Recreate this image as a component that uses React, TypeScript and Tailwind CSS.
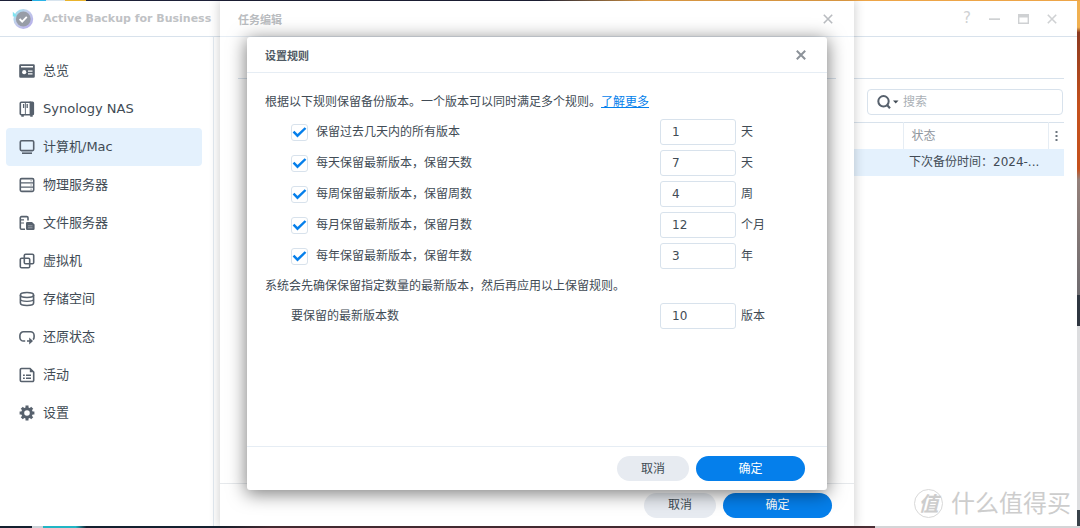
import type { ReactNode } from 'react';

const icon = 'h-4 w-4 shrink-0 text-[#57616d]';

function Svg({ children }: { children: ReactNode }) {
  return (
    <svg viewBox="0 0 16 16" className={icon} fill="none" stroke="currentColor" strokeWidth="1.6" aria-hidden="true">
      {children}
    </svg>
  );
}

const navItems: { label: string; active?: boolean; glyph: ReactNode }[] = [
  {
    label: '总览',
    glyph: (
      <>
        <path d="M1.5 1.2h13a1.3 1.3 0 0 1 1.3 1.3v11a1.3 1.3 0 0 1-1.3 1.3h-13A1.3 1.3 0 0 1 .2 13.5v-11A1.3 1.3 0 0 1 1.5 1.2zM2 3v1.5h12V3z" fill="currentColor" fillRule="evenodd" stroke="none" />
        <circle cx="5.2" cy="9.2" r="2.1" fill="#fff" stroke="none" />
        <path d="M9 8.2h4.5M9 10.8h4.5" stroke="#fff" strokeWidth="1.2" />
      </>
    ),
  },
  {
    label: 'Synology NAS',
    glyph: (
      <>
        <rect x="1.3" y="1.2" width="11" height="12.6" rx="1" />
        <path d="M4.6 3v4M8.2 3v4" strokeWidth="1.3" />
        <path d="M6.4 1.5v12" strokeWidth=".9" />
        <path d="M10.6.4h3A1.5 1.5 0 0 1 15.100 1.900v10.800a1.500 1.500 0 0 1-1.500 1.500h-3zM2.300 14h2.500v1.700H2.300zM11.200 14h2.500v1.700h-2.500z" fill="currentColor" stroke="none" />
      </>
    ),
  },
  {
    label: '计算机/Mac',
    active: true,
    glyph: (
      <>
        <rect x="1.3" y="1.8" width="13.4" height="9.8" rx="1.3" />
        <path d="M3 14.2h10" />
      </>
    ),
  },
  {
    label: '物理服务器',
    glyph: (
      <>
        <rect x="1.3" y="1.6" width="13.4" height="12.8" rx="1.3" />
        <path d="M2 5.8h12M2 10.2h12" strokeWidth="1.2" />
        <path d="M11.5 3.8h1.2M11.5 8h1.2M11.5 12.2h1.2" strokeWidth=".8" />
      </>
    ),
  },
  {
    label: '文件服务器',
    glyph: (
      <>
        <path d="M6 14.2H2.500A1.200 1.200 0 0 1 1.300 13V2.800a1.200 1.200 0 0 1 1.200-1.200h5.300A1.200 1.200 0 0 1 9 2.800V5.500" />
        <path d="M2 4.800h3M2 8h3" strokeWidth="1.200" />
        <path d="M7 8.200A1.200 1.200 0 0 1 8.200 7H13l2.600 2.500v4.300a1.200 1.200 0 0 1-1.200 1.200H8.200A1.200 1.200 0 0 1 7 13.800z" fill="currentColor" stroke="none" />
        <path d="M9 10.800h4.500M9 12.800h4.500" stroke="#aeb3b9" strokeWidth=".8" />
      </>
    ),
  },
  {
    label: '虚拟机',
    glyph: (
      <>
        <rect x="5.3" y="1.3" width="9.4" height="9.4" rx="1.3" />
        <rect x="1.3" y="5.3" width="9.4" height="9.4" rx="1.3" />
      </>
    ),
  },
  {
    label: '存储空间',
    glyph: (
      <>
        <ellipse cx="8" cy="4" rx="6.6" ry="2.5" />
        <path d="M1.4 4v8c0 1.4 3 2.500 6.600 2.500s6.600-1.100 6.600-2.500V4" />
        <path d="M1.400 8.300c0 1.200 3 2 6.600 2s6.600-.8 6.600-2" strokeWidth="1.200" />
      </>
    ),
  },
  {
    label: '还原状态',
    glyph: (
      <>
        <path d="M6.200 12H4.500A3.600 3.600 0 0 1 .9 8.400V6.400A3.600 3.600 0 0 1 4.500 2.800h7a3.600 3.600 0 0 1 3.600 3.600v1.600a3.600 3.600 0 0 1-1 2.600M8 12h3" strokeWidth="1.600" />
        <path d="M10.200 8.400L14 12l-3.800 3.600z" fill="currentColor" stroke="none" />
      </>
    ),
  },
  {
    label: '活动',
    glyph: (
      <>
        <path d="M2.5 1.5H11L14.7 5v8.3a1.2 1.2 0 0 1-1.2 1.2h-11a1.2 1.2 0 0 1-1.2-1.2V2.7a1.2 1.2 0 0 1 1.200-1.200z" />
        <path d="M10.800 1v4.200H15z" fill="currentColor" stroke="none" />
        <path d="M4 8.300h1.800M7 8.300h5M4 11.300h1.800M7 11.300h5" />
      </>
    ),
  },
  {
    label: '设置',
    glyph: (
      <>
        <circle cx="8" cy="8" r="4.3" strokeWidth="3" />
        <path d="M8 .6v2.800M8 12.600v2.800M.6 8h2.800M12.600 8h2.800M2.800 2.800l2 2M11.200 11.200l2 2M2.800 13.200l2-2M11.200 4.800l2-2" strokeWidth="3" />
      </>
    ),
  },
];

const rules = [
  { id: 'recent', label: '保留过去几天内的所有版本', value: '1', unit: '天' },
  { id: 'daily', label: '每天保留最新版本，保留天数', value: '7', unit: '天' },
  { id: 'weekly', label: '每周保留最新版本，保留周数', value: '4', unit: '周' },
  { id: 'monthly', label: '每月保留最新版本，保留月数', value: '12', unit: '个月' },
  { id: 'yearly', label: '每年保留最新版本，保留年数', value: '3', unit: '年' },
];

const field = 'h-[26px] w-19 shrink-0 rounded-[3px] border border-[#d8e2ec] bg-white px-[11px] text-[#414b55] outline-none';

function CloseIcon({ bold }: { bold?: boolean }) {
  return (
    <svg viewBox="0 0 10 10" className="h-[10px] w-[10px]" fill="none" stroke="currentColor" strokeWidth={bold ? 2 : 1.6} aria-hidden="true">
      <path d="M.8.8l8.400 8.400M9.200.8L.8 9.200" />
    </svg>
  );
}

function Actions() {
  return (
    <>
      <button type="button" className="h-[25px] w-18 rounded-full bg-[#e7ebf1] text-[#414b55]">取消</button>
      <button type="button" className="h-[25px] w-[109px] rounded-full bg-[#057feb] text-white">确定</button>
    </>
  );
}

function RulesDialog() {
  return (
    <section role="dialog" aria-label="设置规则" className="absolute inset-x-[27px] inset-y-9 flex flex-col rounded-[3px] bg-white shadow-[0_3px_18px_1px_rgba(0,0,0,0.5)]">
      <header className="flex h-9 shrink-0 items-center justify-between border-b border-[#e6edf4] pr-[21px] pl-[18px]">
        <h2 className="pt-1 text-[11px] leading-4 font-bold text-[#505a64]">设置规则</h2>
        <button type="button" aria-label="关闭" className="text-[#8c9299]"><CloseIcon bold /></button>
      </header>
      <div className="flex grow flex-col gap-[5px] pt-[17px] pr-[61px] pl-[18px]">
        <p className="flex h-6 items-center">
          根据以下规则保留备份版本。一个版本可以同时满足多个规则。
          <a href="#more" className="text-[#057feb] underline">了解更多</a>
        </p>
        {rules.map((r) => (
          <div key={r.id} className="flex h-[26px] items-center pl-[26px]">
            <label className="flex grow items-center gap-2">
              <span className="grid">
                <input type="checkbox" defaultChecked className="peer col-start-1 row-start-1 h-[17px] w-[17px] appearance-none rounded-[3px] border border-[#d8e2ec] bg-white" />
                <svg viewBox="0 0 17 17" className="pointer-events-none invisible col-start-1 row-start-1 h-[17px] w-[17px] peer-checked:visible" fill="none" stroke="#057feb" strokeWidth="2.4" aria-hidden="true">
                  <path d="M2.500 7.700l4 4 8-7.700" />
                </svg>
              </span>
              {r.label}
            </label>
            <input id={r.id} aria-label={r.label} defaultValue={r.value} className={field} />
            <label htmlFor={r.id} className="w-[30px] pl-[5px] whitespace-nowrap">{r.unit}</label>
          </div>
        ))}
        <p className="flex h-6 items-center">系统会先确保保留指定数量的最新版本，然后再应用以上保留规则。</p>
        <div className="flex h-[26px] items-center pl-[26px]">
          <label htmlFor="latest" className="grow">要保留的最新版本数</label>
          <input id="latest" defaultValue="10" className={field} />
          <span className="w-[30px] pl-[5px] whitespace-nowrap">版本</span>
        </div>
      </div>
      <footer className="flex h-11 shrink-0 items-center justify-end gap-[7px] border-t border-[#e6edf4] pr-[22px]">
        <Actions />
      </footer>
    </section>
  );
}

function TaskDialog() {
  return (
    <section role="dialog" aria-label="任务编辑" className="relative flex w-[634px] flex-col bg-white shadow-[0_0_10px_1px_rgba(0,0,0,0.18)]">
      <header className="flex h-9 shrink-0 items-center justify-between border-b border-[#e6edf4] pr-[21px] pl-[18px] text-[#b9bcc0]">
        <h2 className="pt-1 text-[11px] leading-4 font-bold">任务编辑</h2>
        <button type="button" aria-label="关闭"><CloseIcon /></button>
      </header>
      <div className="mx-[18px] h-[42px] shrink-0 border-b border-[#d8e2ec]" />
      <div className="grow" />
      <footer className="flex h-[43px] shrink-0 items-center justify-end gap-[7px] border-t border-[#e6e9ec] pr-[22px]">
        <Actions />
      </footer>
      <RulesDialog />
    </section>
  );
}

export default function App() {
  return (
    <div className="flex min-h-screen flex-col bg-white font-['DejaVu_Sans','Noto_Sans_CJK_SC',sans-serif] text-xs text-[#414b55]">
      <div className="h-px shrink-0 bg-[linear-gradient(90deg,#1d2038_0_3%,#2ab4e8_3%_4.300%,#d8e4ee_4.300%_6%,#e9b32c_6%_8%,#1d2038_8%_50%,#eda548_60%_100%)]" />
      <div className="flex grow">
        <div className="relative flex grow flex-col bg-white">
          <header className="flex h-9 shrink-0 items-center border-b border-[#d8e2ec] pr-5 pl-3">
            <svg viewBox="0 0 22 22" className="h-[22px] w-[22px]" aria-hidden="true">
              <defs>
                <linearGradient id="ring" x1="0" y1="0" x2="1" y2="1">
                  <stop offset="0" stopColor="#8fe6f0" />
                  <stop offset=".4" stopColor="#c3cdea" />
                  <stop offset="1" stopColor="#b3a9ea" />
                </linearGradient>
              </defs>
              <circle cx="11.3" cy="11" r="9.9" fill="url(#ring)" />
              <path d="M.8 3.800v4.700h5z" fill="#7fe3ef" />
              <circle cx="11.300" cy="11" r="7.400" fill="#989da7" />
              <path d="M7.600 11l2.600 2.600 4.600-4.800" fill="none" stroke="#fff" strokeWidth="1.800" />
            </svg>
            <h1 className="ml-[9px] grow text-[11px] leading-4 font-bold text-[#bfc2c5]">Active Backup for Business</h1>
            <div className="flex items-center gap-[18px] text-[#cfd1d3]">
              <button type="button" aria-label="帮助" className="text-[15px] leading-none">?</button>
              <button type="button" aria-label="最小化">
                <svg viewBox="0 0 11 10" className="h-[10px] w-[11px]" aria-hidden="true"><path d="M0 4.300h11v1.700H0z" fill="currentColor" /></svg>
              </button>
              <button type="button" aria-label="最大化">
                <svg viewBox="0 0 11 10" className="h-[10px] w-[11px]" aria-hidden="true"><path d="M0 0h11v10H0zM1.400 3.500v5.100h8.200V3.500z" fill="currentColor" fillRule="evenodd" /></svg>
              </button>
              <button type="button" aria-label="关闭"><CloseIcon /></button>
            </div>
          </header>
          <div className="flex grow">
            <nav className="flex w-[214px] shrink-0 flex-col border-r border-[#e3eaf1] pt-[15px] pr-[11px] pl-[6px] text-[13px]">
              {navItems.map((n) => (
                <a
                  key={n.label}
                  href="#nav"
                  className={n.active ? 'flex h-[38px] items-center gap-2 rounded-[4px] bg-[#e4f1fd] pl-[13px]' : 'flex h-[38px] items-center gap-2 pl-[13px]'}
                >
                  <Svg>{n.glyph}</Svg>
                  {n.label}
                </a>
              ))}
            </nav>
            <main className="flex grow flex-col pr-[13px] pl-6">
              <div className="h-[42px] shrink-0 border-b border-[#d8e2ec]" />
              <div className="flex h-[43px] shrink-0 items-center justify-end pt-[3px] pr-px">
                <div className="flex h-[26px] w-[196px] items-center rounded-[4px] border border-[#d8e2ec] pl-[9px]">
                  <svg viewBox="0 0 22 14" className="h-[14px] w-[22px] shrink-0" fill="none" stroke="#57616d" aria-hidden="true">
                    <circle cx="6.500" cy="6.300" r="5.200" strokeWidth="2" />
                    <path d="M9.800 9.800l3.200 3.400" strokeWidth="2.200" />
                    <path d="M16 5.500h5.500l-2.750 3z" fill="#414b55" stroke="none" />
                  </svg>
                  <input aria-label="搜索" placeholder="搜索" className="w-full bg-transparent pl-1 outline-none placeholder:text-[#aab0b6]" />
                </div>
              </div>
              <table className="w-full table-fixed border-t border-[#d8e2ec] text-left">
                <thead>
                  <tr className="h-[26px] text-[#8f969e]">
                    <th className="font-normal" aria-label="名称" />
                    <th className="w-[145px] border-l border-[#e6edf4] pl-2 font-normal">状态</th>
                    <th className="w-4 border-l border-[#e6edf4]">
                      <button type="button" aria-label="列" className="flex w-full justify-center">
                        <svg viewBox="0 0 3 12" className="h-3 w-[3px]" fill="#6b747d" aria-hidden="true"><path d="M.5 1h2v2h-2zM.5 5h2v2h-2zM.5 9h2v2h-2z" /></svg>
                      </button>
                    </th>
                  </tr>
                </thead>
                <tbody>
                  <tr className="h-[27px] bg-[#e4f1fd]">
                    <td />
                    <td className="pl-[6px] whitespace-nowrap">下次备份时间：2024-...</td>
                    <td />
                  </tr>
                </tbody>
              </table>
            </main>
          </div>
          <div className="absolute right-[6px] bottom-2 flex items-center gap-2 text-2xl leading-none text-[#cdcdcd]">
            <span className="flex h-[29px] w-[29px] items-center justify-center rounded-full border border-[#d8d8d8] text-xl leading-none font-bold italic">值</span>
            什么值得买
          </div>
          <div className="absolute inset-0 flex justify-center pr-[3px]">
            <TaskDialog />
          </div>
        </div>
        <div className="w-[3px] shrink-0 bg-[linear-gradient(180deg,#f0b050_0_5%,#8c3a20_6%,#c4501c_20%,#c4501c_32%,#94807a_34%,#6f6c70_56%,#2f3640_56%_62%,#dcdddf_62%_97%,#39424a_97%)]" />
      </div>
      <div className="h-[2px] shrink-0 bg-[linear-gradient(90deg,#14202f_0_3%,#c9d3d8_3%_4%,#22b5c4_4%_7%,#14202f_8%_20%,#4a2e35_25%_81%,#d4d5d7_81%_100%)]" />
    </div>
  );
}
